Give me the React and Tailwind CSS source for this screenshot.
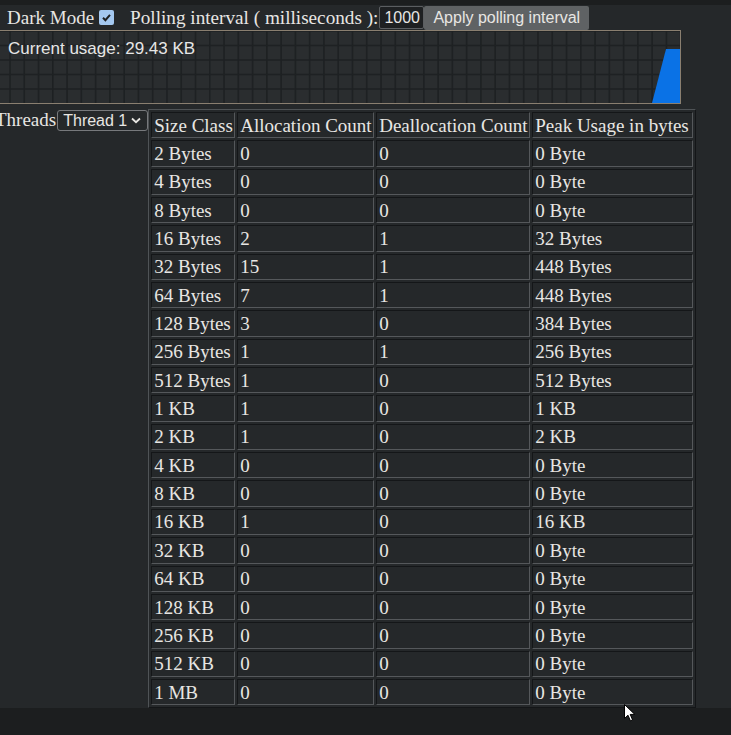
import { useState } from "react";

const rows = [
  ["2 Bytes", "0", "0", "0 Byte"],
  ["4 Bytes", "0", "0", "0 Byte"],
  ["8 Bytes", "0", "0", "0 Byte"],
  ["16 Bytes", "2", "1", "32 Bytes"],
  ["32 Bytes", "15", "1", "448 Bytes"],
  ["64 Bytes", "7", "1", "448 Bytes"],
  ["128 Bytes", "3", "0", "384 Bytes"],
  ["256 Bytes", "1", "1", "256 Bytes"],
  ["512 Bytes", "1", "0", "512 Bytes"],
  ["1 KB", "1", "0", "1 KB"],
  ["2 KB", "1", "0", "2 KB"],
  ["4 KB", "0", "0", "0 Byte"],
  ["8 KB", "0", "0", "0 Byte"],
  ["16 KB", "1", "0", "16 KB"],
  ["32 KB", "0", "0", "0 Byte"],
  ["64 KB", "0", "0", "0 Byte"],
  ["128 KB", "0", "0", "0 Byte"],
  ["256 KB", "0", "0", "0 Byte"],
  ["512 KB", "0", "0", "0 Byte"],
  ["1 MB", "0", "0", "0 Byte"],
];

const cell =
  "h-[26.35px] pl-[2px] pr-0 py-0 text-left font-normal align-middle whitespace-nowrap leading-none border border-t-[#141618] border-l-[#141618] border-b-[#55585b] border-r-[#55585b]";

function UsageChart() {
  const xs = [];
  for (let x = 11; x < 682; x += 14.27) xs.push(x);
  const ys = [1, 15.5, 30, 44.5, 59];
  return (
    <div className="relative -ml-[1px] w-[682px] h-[74px]">
      <svg width="682" height="74" className="block">
        <rect x="0" y="0" width="682" height="74" fill="#2a2d2f" />
        {xs.map((x) => (
          <line key={x} x1={x} y1="0" x2={x} y2="74" stroke="#1e2123" strokeWidth="1.6" />
        ))}
        {ys.map((y) => (
          <line key={y} x1="0" y1={y} x2="682" y2={y} stroke="#1e2123" strokeWidth="1.6" />
        ))}
        <polygon points="653,73 667,19 681,19 681,73" fill="#0a72e6" />
        <rect x="0.5" y="0.5" width="681" height="73" fill="none" stroke="#8a7f70" />
      </svg>
      <span className="absolute left-[9px] top-[10px] text-[17px] leading-none text-[#e6e6e6] font-['Liberation_Sans',Arial,sans-serif]">
        Current usage: 29.43 KB
      </span>
    </div>
  );
}

export default function App() {
  const [interval, setIntervalValue] = useState("1000");
  const [thread, setThread] = useState("1");

  return (
    <div className="relative min-h-screen bg-[#1c1e1f] pt-[5px] text-[#e8e6e3] font-['Liberation_Serif','Times_New_Roman',serif] overflow-hidden">
      <div className="bg-[#25282a]">
        {/* Controls */}
        <div className="flex items-center h-[25px] pl-[7px] text-[19px] leading-none whitespace-nowrap">
          <span>Dark Mode</span>
          <span className="ml-[5px] w-[15px] h-[15px] rounded-[2px] bg-[#a4c8f0] flex items-center justify-center">
            <svg width="11" height="11" viewBox="0 0 11 11">
              <path d="M2 5.8 L4.4 8.2 L9 2.8" fill="none" stroke="#1f2123" strokeWidth="2" />
            </svg>
          </span>
          <span className="ml-[16px] text-[19.2px]">Polling interval ( milliseconds ):</span>
          <input
            value={interval}
            onChange={(e) => setIntervalValue(e.target.value)}
            className="ml-[1px] w-[45px] h-[23.5px] pl-[4px] bg-[#1e2022] border border-[#5b5e61] rounded-[2px] text-[16px] text-[#e8e6e3] font-['Liberation_Sans',Arial,sans-serif] outline-none"
          />
          <button className="h-[24px] px-[9px] bg-[#5f6264] rounded-[2px] text-[16px] text-[#e8e6e3] font-['Liberation_Sans',Arial,sans-serif] leading-none">
            Apply polling interval
          </button>
        </div>

        <UsageChart />

        {/* Threads + table */}
        <div className="flex items-start mt-[5px]">
          <span className="-ml-[5px] mt-[1px] text-[19px] leading-none">Threads</span>
          <div className="relative mt-[1px] ml-[1px]">
            <select
              value={thread}
              onChange={(e) => setThread(e.target.value)}
              className="appearance-none block w-[91px] h-[21px] pl-[5px] bg-[#25282a] border border-[#77797c] rounded-[3px] text-[16px] leading-none text-[#e8e6e3] font-['Liberation_Sans',Arial,sans-serif] outline-none"
            >
              <option value="1">Thread 1</option>
              <option value="2">Thread 2</option>
            </select>
            <svg
              width="10"
              height="7"
              viewBox="0 0 10 7"
              className="absolute left-[74px] top-[7px] pointer-events-none"
            >
              <path d="M1 1.5 L5 5.2 L9 1.5" fill="none" stroke="#e8e6e3" strokeWidth="1.8" />
            </svg>
          </div>
          <table className="table-fixed w-[548px] border-separate border-spacing-[2px] border border-t-[#4f5356] border-l-[#4f5356] border-b-[#141618] border-r-[#141618] text-[19px]">
            <thead>
              <tr>
                <th className={`${cell} w-[84px]`}>Size Class</th>
                <th className={`${cell} w-[137px]`}>Allocation Count</th>
                <th className={`${cell} w-[154px]`}>Deallocation Count</th>
                <th className={`${cell} w-[161px]`}>Peak Usage in bytes</th>
              </tr>
            </thead>
            <tbody>
              {rows.map((r) => (
                <tr key={r[0]}>
                  {r.map((v, i) => (
                    <td key={i} className={cell}>
                      {v}
                    </td>
                  ))}
                </tr>
              ))}
            </tbody>
          </table>
        </div>
      </div>

      {/* mouse pointer */}
      <svg
        width="12"
        height="19"
        viewBox="0 0 12 19"
        className="absolute left-[624px] top-[704px] pointer-events-none"
      >
        <path
          d="M0.5 0.5 L0.5 14.5 L4 11.2 L6.4 16.8 L8.6 15.9 L6.2 10.4 L10.8 10.4 Z"
          fill="#ffffff"
          stroke="#000000"
          strokeWidth="1"
        />
      </svg>
    </div>
  );
}
